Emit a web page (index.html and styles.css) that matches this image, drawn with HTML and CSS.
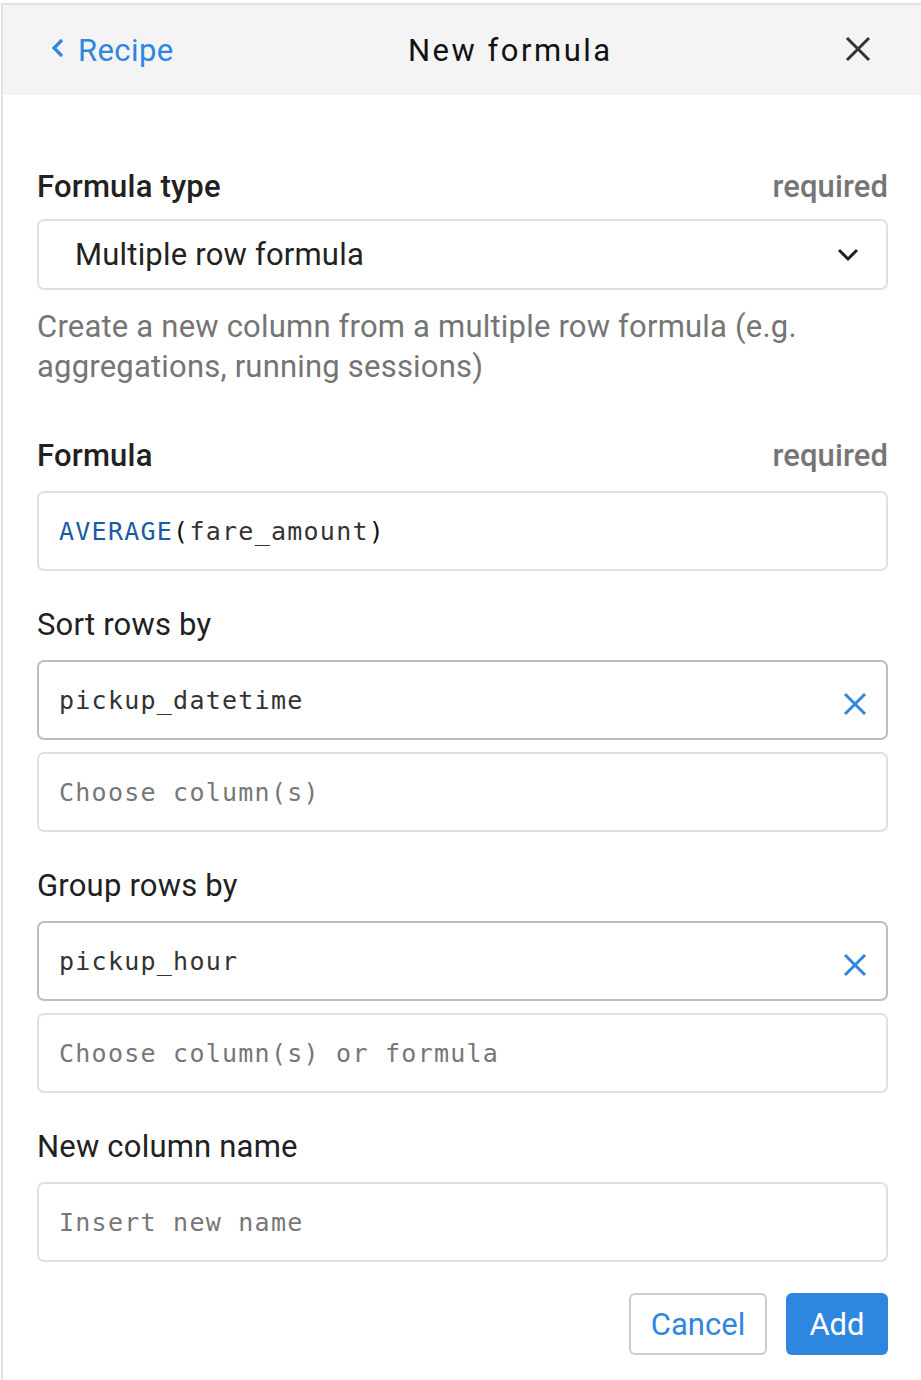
FILE: index.html
```html
<!DOCTYPE html>
<html>
<head>
<meta charset="utf-8">
<link rel="stylesheet" href="styles.css">
</head>
<body>
<div class="panel">
  <header class="header">
    <a class="back">
      <svg class="back-icon" width="16" height="20" viewBox="0 0 16 20"><path d="M12 2 L4 10 L12 18" fill="none" stroke="#2e86de" stroke-width="3.2"/></svg>
      <span>Recipe</span>
    </a>
    <div class="title">New formula</div>
    <svg class="close" width="26" height="26" viewBox="0 0 26 26"><path d="M2 2 L24 24 M24 2 L2 24" stroke="#333" stroke-width="3"/></svg>
  </header>
  <main class="content">
    <div class="label-row first">
      <span class="label strong">Formula type</span>
      <span class="req">required</span>
    </div>
    <div class="select">
      <span>Multiple row formula</span>
      <svg width="22" height="14" viewBox="0 0 22 14"><path d="M2 2 L11 11 L20 2" fill="none" stroke="#222" stroke-width="3"/></svg>
    </div>
    <p class="desc">Create a new column from a multiple row formula (e.g. aggregations, running sessions)</p>

    <div class="label-row">
      <span class="label strong">Formula</span>
      <span class="req">required</span>
    </div>
    <div class="input"><span class="fn">AVERAGE</span><span class="paren">(</span>fare_amount<span class="paren">)</span></div>

    <div class="label-row"><span class="label">Sort rows by</span></div>
    <div class="input filled">
      <span>pickup_datetime</span>
      <svg class="clear" width="24" height="24" viewBox="0 0 24 24"><path d="M2 2 L22 22 M22 2 L2 22" stroke="#2e86de" stroke-width="3"/></svg>
    </div>
    <div class="input placeholder stacked">Choose column(s)</div>

    <div class="label-row"><span class="label">Group rows by</span></div>
    <div class="input filled">
      <span>pickup_hour</span>
      <svg class="clear" width="24" height="24" viewBox="0 0 24 24"><path d="M2 2 L22 22 M22 2 L2 22" stroke="#2e86de" stroke-width="3"/></svg>
    </div>
    <div class="input placeholder stacked">Choose column(s) or formula</div>

    <div class="label-row"><span class="label">New column name</span></div>
    <div class="input placeholder">Insert new name</div>

    <div class="actions">
      <button class="btn cancel">Cancel</button>
      <button class="btn add">Add</button>
    </div>
  </main>
</div>
</body>
</html>
```

FILE: styles.css
```css
html, body {
  margin: 0;
  padding: 0;
  background: #fff;
}
body {
  font-family: Roboto, "Noto Sans", sans-serif;
  color: #212121;
  padding-top: 3px;
}
.panel {
  border-top: 2px solid #e2e2e2;
  border-left: 2px solid #e2e2e2;
  margin-left: 1px;
  min-height: 1375px;
}
.header {
  height: 90px;
  background: #f4f4f4;
  display: flex;
  align-items: center;
  position: relative;
  padding: 0 50px 0 47px;
}
.back {
  display: flex;
  align-items: center;
  gap: 12px;
  color: #2e86de;
  font-size: 31px;
  letter-spacing: 0.4px;
}
.back-icon {
  margin-top: -4px;
}
.title {
  position: absolute;
  top: 0;
  bottom: 0;
  left: 405px;
  display: flex;
  align-items: center;
  font-size: 31px;
  letter-spacing: 2.5px;
  color: #111;
}
.close {
  margin-left: auto;
  margin-top: -2px;
}
.content {
  padding: 71px 33px 0 34px;
}
.label-row {
  display: flex;
  justify-content: space-between;
  align-items: center;
  height: 40px;
  font-size: 31px;
  letter-spacing: 0.2px;
  margin-top: 33px;
  margin-bottom: 16px;
}
.label-row.first {
  margin-top: 0;
  margin-bottom: 13px;
}
.label.strong {
  font-weight: 500;
}
.req {
  color: #757575;
  font-weight: 500;
  letter-spacing: 0.1px;
}
.select {
  height: 71px;
  box-sizing: border-box;
  border: 2px solid #e0e0e0;
  border-radius: 7px;
  display: flex;
  align-items: center;
  justify-content: space-between;
  padding: 0 27px 0 36px;
  font-size: 31px;
  letter-spacing: 0.2px;
  color: #222;
}
.desc {
  margin: 17px 0 0;
  font-size: 31px;
  letter-spacing: 0.2px;
  line-height: 40px;
  color: #757575;
}
.desc + .label-row {
  margin-top: 48px;
}
.input {
  height: 80px;
  box-sizing: border-box;
  border: 2px solid #e0e0e0;
  border-radius: 7px;
  display: flex;
  align-items: center;
  padding: 0 19px 0 20px;
  font-family: "DejaVu Sans Mono", monospace;
  font-size: 25px;
  letter-spacing: 1.25px;
  color: #333;
}
.input.filled {
  border-color: #bdbdbd;
  justify-content: space-between;
}
.input.placeholder {
  color: #777;
}
.input.stacked {
  margin-top: 12px;
}
.fn {
  color: #1b5aa6;
}
.paren {
  color: #111;
}
.clear {
  margin-top: 8px;
}
.actions {
  display: flex;
  justify-content: flex-end;
  gap: 19px;
  margin-top: 31px;
}
.btn {
  height: 62px;
  border-radius: 6px;
  font-family: Roboto, "Noto Sans", sans-serif;
  font-size: 31px;
  padding: 0;
}
.cancel {
  width: 138px;
  background: #fff;
  border: 2px solid #cccccc;
  color: #2e86de;
}
.add {
  width: 102px;
  background: #2e86de;
  border: none;
  color: #fff;
}
```
